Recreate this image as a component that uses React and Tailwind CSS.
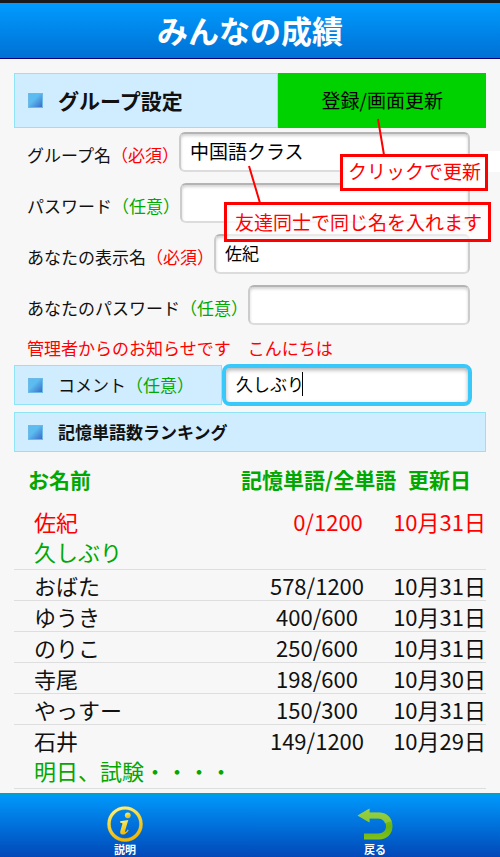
import { useState } from 'react';

const members = [
  { name: '佐紀', score: '0/1200', date: '10月31日', comment: '久しぶり', me: true },
  { name: 'おばた', score: '578/1200', date: '10月31日' },
  { name: 'ゆうき', score: '400/600', date: '10月31日' },
  { name: 'のりこ', score: '250/600', date: '10月31日' },
  { name: '寺尾', score: '198/600', date: '10月30日' },
  { name: 'やっすー', score: '150/300', date: '10月31日' },
  { name: '石井', score: '149/1200', date: '10月29日', comment: '明日、試験・・・・' },
];

const inputStyle =
  'h-10 min-w-0 flex-1 rounded-md border-2 border-t-[#b4b4b4] border-x-[#cccccc] border-b-[#dcdcdc] bg-white px-[9px] pb-1 text-black shadow-[inset_0_2px_3px_#d4d4d4] outline-none';

function Bullet() {
  return (
    <span className="size-[15px] shrink-0 border border-[#6cb8e6] bg-linear-to-br from-[#5cbcf0] from-40% to-[#3d6cc8]" />
  );
}

function Required() {
  return <span className="text-[#ff0000]">（必須）</span>;
}

function Optional() {
  return <span className="text-[#00a800]">（任意）</span>;
}

function Field({ id, label, required, type = 'text', value, onChange, large }) {
  return (
    <div className="flex items-center pr-4 pl-[13px]">
      <label htmlFor={id} className="shrink-0 pt-1.5 text-[17px] leading-6">
        {label}
        {required ? <Required /> : <Optional />}
      </label>
      <input
        id={id}
        type={type}
        value={value}
        onChange={(e) => onChange(e.target.value)}
        className={`${inputStyle} ${large ? 'text-[19px]' : 'text-[17px]'}`}
      />
    </div>
  );
}

function InfoIcon() {
  return (
    <svg viewBox="0 0 36 36" className="size-9" aria-hidden="true">
      <defs>
        <linearGradient id="gold" x1="0" y1="0" x2="0.3" y2="1">
          <stop offset="0" stopColor="#fff583" />
          <stop offset="0.5" stopColor="#f2d73c" />
          <stop offset="1" stopColor="#f5b800" />
        </linearGradient>
      </defs>
      <circle cx="18" cy="18" r="16" fill="none" stroke="#4a86a8" strokeWidth="4" />
      <circle cx="18" cy="18" r="16" fill="none" stroke="url(#gold)" strokeWidth="3.2" />
      <circle cx="20.8" cy="9.3" r="2.9" fill="url(#gold)" />
      <path
        d="M13.2 15.2 L21.3 14 L18.2 24.6 Q17.8 26.2 18.7 25.9 Q19.7 25.4 20.8 23.6 L21.7 24.2 Q18.8 28.8 15.4 28.6 Q12.5 28.2 13.4 24.8 L15.4 18 Q15.8 16.4 13 16.4 Z"
        fill="url(#gold)"
      />
    </svg>
  );
}

function BackIcon() {
  return (
    <svg viewBox="0 0 36 36" className="size-9" aria-hidden="true">
      <defs>
        <linearGradient id="leaf" x1="0" y1="0" x2="0" y2="1">
          <stop offset="0" stopColor="#8cc63a" />
          <stop offset="0.6" stopColor="#69b40c" />
          <stop offset="1" stopColor="#80c020" />
        </linearGradient>
      </defs>
      <path
        d="M0.5 9.5 L12.5 2.5 V6.5 H22 C30.5 6.5 35.5 12.5 35.5 20 C35.5 28 30 33.5 22 33.5 H7 V27.5 H21 C26 27.5 29 24.5 29 20.3 C29 15.5 26 12.5 21 12.5 H12.5 V16.5 Z"
        fill="url(#leaf)"
      />
      <path
        d="M0.5 9.5 L12.5 2.5 V6.5 H22 C29 6.5 33 10.5 34.8 15.5 Q31 15.5 28 17.5 C27 14.5 24.5 12.5 21 12.5 H12.5 V16.5 Z"
        fill="#a4d850"
        opacity="0.5"
      />
    </svg>
  );
}

// Red call-outs drawn over the form, with lines to what they explain
function Callouts() {
  return (
    <div className="pointer-events-none absolute inset-0 text-[19px] text-[#ff0000]">
      <div className="absolute top-[92px] right-0 h-[21px] w-4 bg-white" />
      <div className="absolute top-[95px] left-[340px] border-[3px] border-[#ff0000] bg-white pr-[4px] pb-1 pl-[5px] leading-[27px] whitespace-nowrap">
        クリックで更新
      </div>
      <div className="absolute top-[143px] left-[224px] border-[3px] border-[#ff0000] bg-white/70 pr-[6px] pl-2 leading-[34px] whitespace-nowrap">
        友達同士で同じ名を入れます
      </div>
      <svg className="absolute top-0 left-0 h-full w-full overflow-visible" aria-hidden="true">
        <path d="M378 60 L384 96 M249 107 L260 144" stroke="#ff0000" strokeWidth="2" fill="none" />
      </svg>
    </div>
  );
}

export default function App() {
  const [group, setGroup] = useState('中国語クラス');
  const [groupPassword, setGroupPassword] = useState('');
  const [displayName, setDisplayName] = useState('佐紀');
  const [password, setPassword] = useState('');
  const [comment, setComment] = useState('久しぶり');

  return (
    <div className="flex h-screen flex-col bg-[#f7f7f7] font-['Noto_Sans_CJK_JP',sans-serif] text-[#111111]">
      <div className="h-[3px] shrink-0 bg-[#1a1a1a]" />
      <header className="shrink-0 border-b border-[#00007c] bg-linear-to-b from-[#009cff] to-[#0070d4]">
        <h1 className="pb-0.5 text-center text-[31px] leading-[53px] font-bold text-white">
          みんなの成績
        </h1>
      </header>

      <main className="relative min-h-0 flex-1 overflow-hidden px-3.5 pt-3.5">
        <div className="flex h-[55px]">
          <div className="flex flex-1 items-center gap-[15px] border border-[#90e4f8] bg-[#d0ecff] pl-[13px]">
            <Bullet />
            <h2 className="text-[21px] font-bold">グループ設定</h2>
          </div>
          <button type="button" className="w-[44%] bg-[#00d200] text-[19px] text-black">
            登録/画面更新
          </button>
        </div>

        <form className="pt-1" onSubmit={(e) => e.preventDefault()}>
          <div className="flex flex-col gap-[11px]">
            <Field id="group" label="グループ名" required large value={group} onChange={setGroup} />
            <Field
              id="group-password"
              label="パスワード"
              type="password"
              value={groupPassword}
              onChange={setGroupPassword}
            />
            <Field
              id="display-name"
              label="あなたの表示名"
              required
              value={displayName}
              onChange={setDisplayName}
            />
            <Field
              id="password"
              label="あなたのパスワード"
              type="password"
              value={password}
              onChange={setPassword}
            />
          </div>

          <p className="pt-[11px] pb-1 pl-[13px] text-[17px] leading-6 text-[#ff0000]">
            管理者からのお知らせです　こんにちは
          </p>

          <div className="flex items-center pr-3.5">
            <label
              htmlFor="comment"
              className="flex h-10 w-[208px] items-center gap-[15px] border border-[#90e4f8] bg-[#d0ecff] pl-[13px] text-[17px]"
            >
              <Bullet />
              <span>
                コメント
                <Optional />
              </span>
            </label>
            <div className="relative flex min-w-0 flex-1">
              <input
                id="comment"
                value={comment}
                onChange={(e) => setComment(e.target.value)}
                className="h-[42px] min-w-0 flex-1 rounded-lg border-4 border-[#38c8fa] bg-white px-2.5 pb-1 text-[17px] text-black shadow-[inset_0_2px_4px_#b0b0b0] outline-none"
              />
              <span className="absolute top-2 left-20 h-6 w-px bg-black" />
            </div>
          </div>
        </form>

        <div className="mt-1.5 flex h-10 items-center gap-[15px] border border-[#90e4f8] bg-[#d0ecff] pl-[13px]">
          <Bullet />
          <h2 className="text-[17px] font-bold">記憶単語数ランキング</h2>
        </div>

        <table className="w-full table-fixed text-[22px] leading-[30px] whitespace-nowrap">
          <thead>
            <tr className="h-[54px] text-[21px] text-[#00a800]">
              <th className="pl-3.5 text-left">お名前</th>
              <th className="w-[152px]">記憶単語/全単語</th>
              <th className="w-[93px]">更新日</th>
            </tr>
          </thead>
          {members.map((m) => (
            <tbody key={m.name} className="border-b border-[#dedede]">
              <tr className={m.me ? 'text-[#ff0000]' : ''}>
                <td className="pl-5">{m.name}</td>
                <td className={m.me ? 'pl-[22px] text-center' : 'text-center'}>{m.score}</td>
                <td className="text-right">{m.date}</td>
              </tr>
              {m.comment && (
                <tr className="text-[#00a800]">
                  <td colSpan={3} className="pb-[3px] pl-5">
                    {m.comment}
                  </td>
                </tr>
              )}
            </tbody>
          ))}
        </table>

        <Callouts />
      </main>

      <footer className="grid h-16 shrink-0 grid-cols-2 border-t-2 border-[#00a0d0] bg-linear-to-b from-[#0098fc] to-[#0448b8] text-[11px] leading-[15px] font-bold text-white">
        <button type="button" className="flex flex-col items-center justify-end">
          <InfoIcon />
          説明
        </button>
        <button type="button" className="flex flex-col items-center justify-end">
          <BackIcon />
          戻る
        </button>
      </footer>
    </div>
  );
}
